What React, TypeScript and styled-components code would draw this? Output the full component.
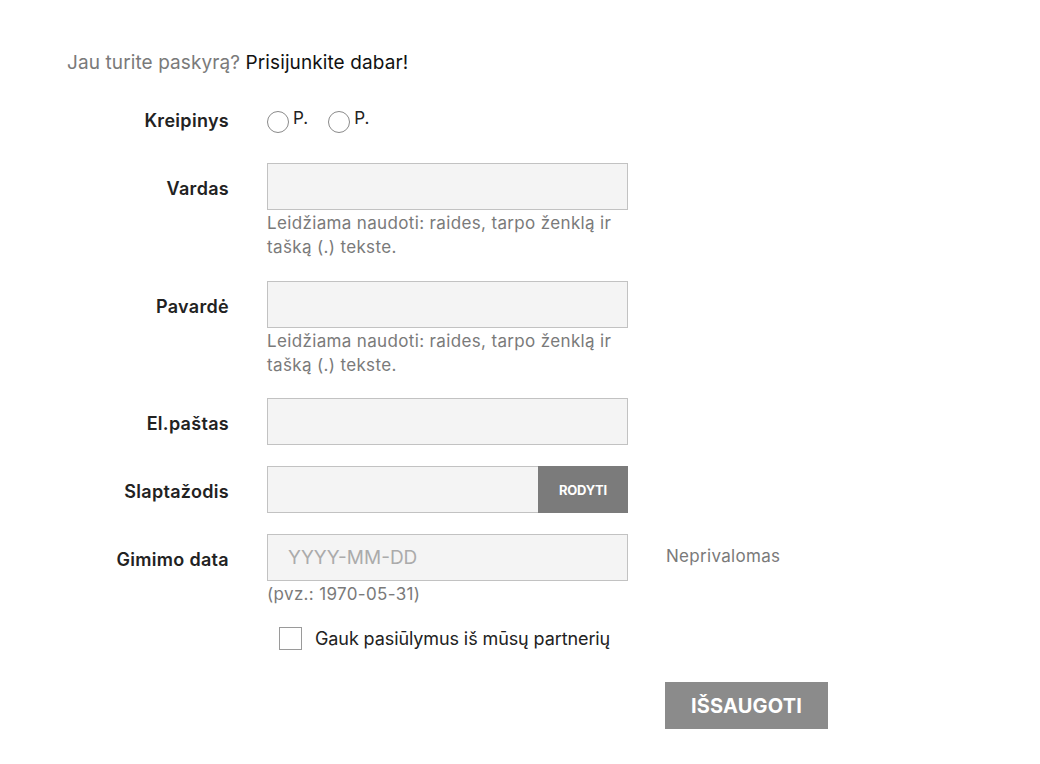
import React from 'react';
import styled, { createGlobalStyle } from 'styled-components';

const GlobalStyle = createGlobalStyle`
  body {
    margin: 0;
    background: #fff;
    font-family: Inter, "Noto Sans", "Liberation Sans", sans-serif;
    color: #1d1d1d;
  }
`;

const Page = styled.div`
  padding: 51px 0 0 67px;
`;

const LoginNote = styled.p`
  margin: 0 0 22px;
  font-size: 19px;
  line-height: 24px;
  letter-spacing: 0.1px;
  color: #7a7a7a;

  a {
    color: #111;
    text-decoration: none;
  }
`;

const Row = styled.div<{ $gap?: number }>`
  display: grid;
  grid-template-columns: 162px 361px auto;
  column-gap: 38px;
  margin-bottom: ${(p) => p.$gap ?? 21}px;
`;

const Label = styled.label<{ $line?: number }>`
  grid-column: 1;
  text-align: right;
  font-size: 18px;
  font-weight: 600;
  line-height: ${(p) => p.$line ?? 51}px;
  height: 47px;
  color: #222;
  letter-spacing: 0.3px;
`;

const Field = styled.div`
  grid-column: 2;
  display: flex;
  flex-direction: column;
`;

const Input = styled.input`
  box-sizing: border-box;
  width: 100%;
  height: 47px;
  margin: 0;
  padding: 0 20px;
  border: 1px solid #c2c2c2;
  background: #f4f4f4;
  font-family: inherit;
  font-size: 19px;
  color: #222;
  outline: none;

  &::placeholder {
    color: #ababab;
  }
`;

const Hint = styled.div`
  margin-top: 1px;
  font-size: 17px;
  line-height: 24px;
  color: #7a7a7a;
  letter-spacing: 0.35px;
`;

const Aside = styled.div`
  grid-column: 3;
  font-size: 17px;
  line-height: 45px;
  letter-spacing: 0.3px;
  color: #7a7a7a;
`;

const Radios = styled.div`
  display: flex;
  align-items: center;
  gap: 20px;
  height: 47px;
`;

const RadioOption = styled.label`
  display: flex;
  align-items: center;
  gap: 4px;
  font-size: 17px;
  color: #222;
  cursor: pointer;
`;

const RadioCircle = styled.span`
  box-sizing: border-box;
  display: inline-block;
  width: 22px;
  height: 22px;
  border: 1px solid #8a8a8a;
  border-radius: 50%;
  background: #fff;
  margin-top: 2px;
`;

const RadioText = styled.span`
  margin-top: -5px;
`;

const PasswordBox = styled.div`
  display: flex;

  ${Input} {
    border-right: none;
  }
`;

const ShowButton = styled.button`
  flex: 0 0 90px;
  height: 47px;
  border: none;
  background: #7b7b7b;
  color: #fff;
  font-family: inherit;
  font-size: 13px;
  font-weight: 700;
  letter-spacing: -0.2px;
  cursor: pointer;
`;

const CheckRow = styled.label`
  grid-column: 2 / span 2;
  display: flex;
  align-items: center;
  gap: 13px;
  padding-left: 12px;
  height: 23px;
  font-size: 18px;
  line-height: 23px;
  color: #222;
  letter-spacing: -0.1px;
`;

const CheckBox = styled.span`
  box-sizing: border-box;
  width: 23px;
  height: 23px;
  border: 1px solid #9a9a9a;
  background: #fff;
`;

const SaveButton = styled.button`
  grid-column: 3;
  justify-self: start;
  margin-left: -1px;
  width: 163px;
  height: 47px;
  border: none;
  background: #8b8b8b;
  color: #fff;
  font-family: inherit;
  font-size: 20px;
  font-weight: 700;
  letter-spacing: 0.2px;
  cursor: pointer;
`;

const HINT = (
  <>
    Leidžiama naudoti: raides, tarpo ženklą ir
    <br />
    tašką (.) tekste.
  </>
);

export default function App() {
  return (
    <Page>
      <GlobalStyle />
      <LoginNote>
        Jau turite paskyrą? <a href="#">Prisijunkite dabar!</a>
      </LoginNote>

      <Row $gap={19}>
        <Label $line={48}>Kreipinys</Label>
        <Field>
          <Radios>
            <RadioOption>
              <RadioCircle />
              <RadioText>P.</RadioText>
            </RadioOption>
            <RadioOption>
              <RadioCircle />
              <RadioText>P.</RadioText>
            </RadioOption>
          </Radios>
        </Field>
      </Row>

      <Row $gap={22}>
        <Label>Vardas</Label>
        <Field>
          <Input />
          <Hint>{HINT}</Hint>
        </Field>
      </Row>

      <Row>
        <Label>Pavardė</Label>
        <Field>
          <Input />
          <Hint>{HINT}</Hint>
        </Field>
      </Row>

      <Row>
        <Label>El.paštas</Label>
        <Field>
          <Input />
        </Field>
      </Row>

      <Row>
        <Label>Slaptažodis</Label>
        <Field>
          <PasswordBox>
            <Input type="password" />
            <ShowButton>RODYTI</ShowButton>
          </PasswordBox>
        </Field>
      </Row>

      <Row $gap={21}>
        <Label>Gimimo data</Label>
        <Field>
          <Input placeholder="YYYY-MM-DD" />
          <Hint>(pvz.: 1970-05-31)</Hint>
        </Field>
        <Aside>Neprivalomas</Aside>
      </Row>

      <Row $gap={32}>
        <CheckRow>
          <CheckBox />
          Gauk pasiūlymus iš mūsų partnerių
        </CheckRow>
      </Row>

      <Row>
        <SaveButton>IŠSAUGOTI</SaveButton>
      </Row>
    </Page>
  );
}
